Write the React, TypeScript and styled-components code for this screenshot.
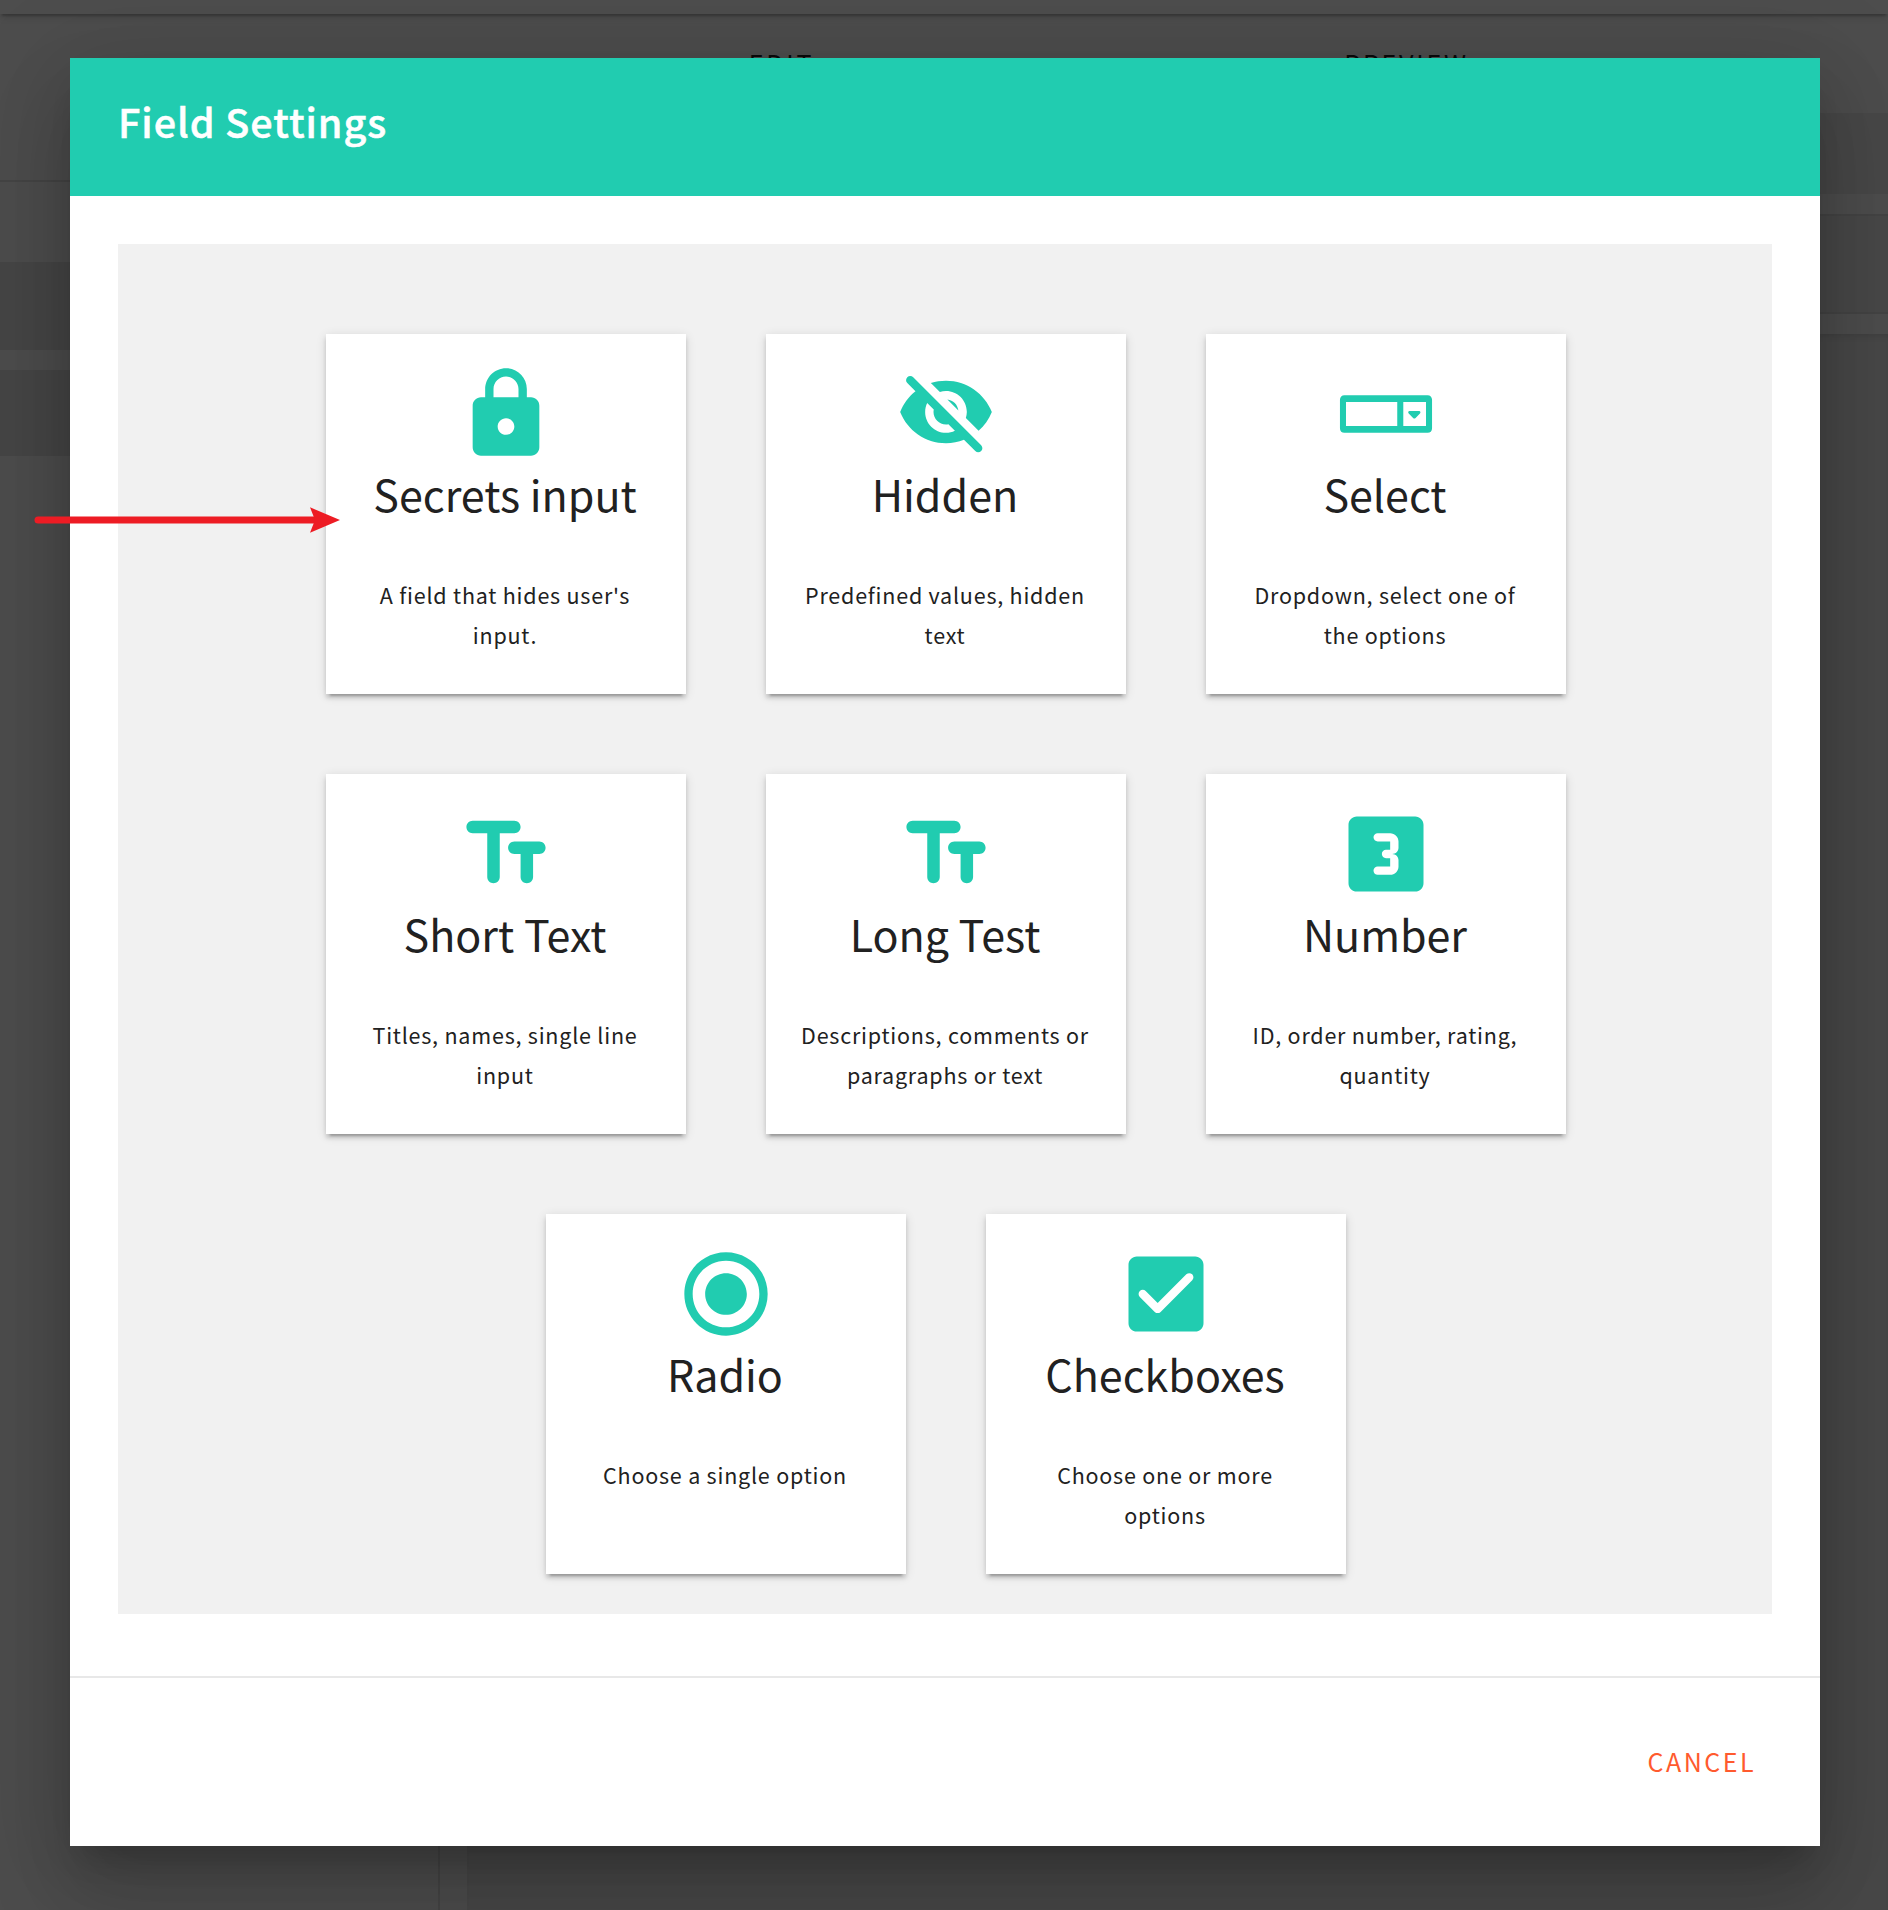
import React from "react";
import styled, { createGlobalStyle } from "styled-components";

const TEAL = "#21ccb0";

const GlobalStyle = createGlobalStyle`
  * { box-sizing: border-box; }
  html, body { margin: 0; padding: 0; background: #4c4c4c; }
  body {
    font-family: "Noto Sans CJK SC", "Noto Sans", sans-serif;
    color: #212121;
    overflow: hidden;
  }
`;

const Page = styled.div`
  position: relative;
  width: 1888px;
  height: 1910px;
  overflow: hidden;
`;

const Workspace = styled.div`
  display: flex;
  flex-direction: column;
  height: 100%;
  background: #4d4d4d;
`;

const TopBar = styled.div`
  flex: none;
  height: 14px;
  box-shadow: 0 4px 2px -2px rgba(0, 0, 0, 0.2), 0 2px 8px rgba(0, 0, 0, 0.16);
`;

const Tabs = styled.div`
  display: grid;
  grid-template-columns: 625px 625px;
  flex: none;
  height: 99px;
  padding-left: 469px;
`;

const Tab = styled.div`
  padding-top: 32px;
  font-size: 25px;
  line-height: 34px;
  letter-spacing: 2.8px;
  text-align: center;
  color: #0a0a0a;
`;

const Columns = styled.div`
  display: flex;
  flex: 1;
`;

const Sidebar = styled.div`
  display: flex;
  flex-direction: column;
  width: 440px;
  border-right: 2px solid #454545;
`;

const SidebarHead = styled.div`
  height: 69px;
  border-bottom: 2px solid #454545;
  margin-bottom: 80px;
`;

const SidebarItem = styled.div<{ $height: number }>`
  height: ${(p) => p.$height}px;
  margin-bottom: 20px;
  background: #464646;
`;

const Content = styled.div`
  display: flex;
  flex-direction: column;
  flex: 1;
  margin-left: 27px;
`;

const ContentBand = styled.div<{ $height: number; $lined?: boolean }>`
  height: ${(p) => p.$height}px;
  margin-bottom: 20px;
  background: #484848;
  border: 0 solid #444;
  border-width: ${(p) => (p.$lined ? "2px 0" : "0")};
`;

const ContentCanvas = styled.div`
  flex: 1;
  background: #484848;
  box-shadow: inset 0 6px 6px -4px rgba(0, 0, 0, 0.12);
`;

const Overlay = styled.div`
  position: absolute;
  inset: 0;
  padding: 58px 68px 64px 70px;
  display: flex;
`;

const Dialog = styled.section`
  display: flex;
  flex-direction: column;
  flex: 1;
  background: #fff;
  box-shadow: 0 22px 30px -14px rgba(0, 0, 0, 0.2),
    0 48px 76px 6px rgba(0, 0, 0, 0.14), 0 18px 92px 16px rgba(0, 0, 0, 0.12);
`;

const DialogHeader = styled.header`
  height: 138px;
  padding: 33px 48px 0;
  background: ${TEAL};
`;

const DialogTitle = styled.h2`
  margin: 0;
  font-size: 39.5px;
  line-height: 60px;
  font-weight: 500;
  letter-spacing: 0.95px;
  color: #fff;
  -webkit-text-stroke: 0.5px #fff;
`;

const DialogBody = styled.div`
  height: 1480px;
  padding: 48px 48px 62px;
`;

const Picker = styled.div`
  display: flex;
  flex-wrap: wrap;
  justify-content: center;
  align-content: flex-start;
  gap: 80px;
  height: 100%;
  padding: 90px 206px 0 208px;
  background: #f1f1f1;
`;

const Card = styled.article`
  display: flex;
  flex-direction: column;
  align-items: center;
  width: 360px;
  height: 360px;
  padding: 30px 32px 0;
  background: #fff;
  box-shadow: 0 6px 2px -4px rgba(0, 0, 0, 0.2),
    0 4px 4px rgba(0, 0, 0, 0.14), 0 2px 10px rgba(0, 0, 0, 0.12);
`;

const CardIcon = styled.svg`
  flex: none;
  width: 100px;
  height: 100px;
  fill: ${TEAL};
`;

const CardTitle = styled.h3`
  margin: 0 0 53px;
  padding-right: 2px;
  font-size: 43px;
  line-height: 58px;
  font-weight: 400;
  white-space: nowrap;
`;

const CardText = styled.p`
  margin: 0;
  padding-right: 2px;
  font-size: 21.5px;
  line-height: 40px;
  letter-spacing: 0.78px;
  text-align: center;
`;

const DialogFooter = styled.footer`
  display: flex;
  flex: 1;
  justify-content: flex-end;
  align-items: flex-start;
  padding: 65px 64px 0;
  border-top: 2px solid #e8e8e8;
`;

const CancelButton = styled.button`
  border: 0;
  padding: 0;
  background: none;
  font: inherit;
  font-size: 25px;
  line-height: 36px;
  letter-spacing: 2.5px;
  color: #ff5a2e;
`;

const Pointer = styled.svg`
  position: absolute;
  left: 30px;
  top: 500px;
  width: 320px;
  height: 40px;
`;

const SQUARE =
  "M19 3H5c-1.1 0-2 .9-2 2v14c0 1.1.9 2 2 2h14c1.1 0 2-.9 2-2V5c0-1.1-.9-2-2-2z";

const ICONS = {
  lock: "M18 8h-1V6c0-2.76-2.24-5-5-5S7 3.24 7 6v2H6c-1.1 0-2 .9-2 2v10c0 1.1.9 2 2 2h12c1.1 0 2-.9 2-2V10c0-1.1-.9-2-2-2zm-6 9c-1.1 0-2-.9-2-2s.9-2 2-2 2 .9 2 2-.9 2-2 2zM9 8V6c0-1.66 1.34-3 3-3s3 1.34 3 3v2H9z",
  hidden:
    "M12 6.5c2.76 0 5 2.24 5 5 0 .51-.1 1-.24 1.46l3.06 3.06c1.39-1.23 2.49-2.77 3.18-4.53C21.27 7.11 17 4 12 4c-1.27 0-2.49.2-3.64.57l2.17 2.17c.47-.14.96-.24 1.47-.24zM2.71 3.16c-.39.39-.39 1.02 0 1.41l1.97 1.97C3.06 7.83 1.77 9.53 1 11.5 2.73 15.89 7 19 12 19c1.52 0 2.97-.3 4.31-.82l2.72 2.72c.39.39 1.02.39 1.41 0 .39-.39.39-1.02 0-1.41L4.13 3.16c-.39-.39-1.03-.39-1.42 0zM12 16.5c-2.76 0-5-2.24-5-5 0-.77.18-1.5.49-2.14l1.57 1.57c-.03.18-.06.37-.06.57 0 1.66 1.34 3 3 3 .2 0 .38-.03.57-.07L14.14 16c-.65.32-1.37.5-2.14.5zm2.97-5.33c-.15-1.4-1.25-2.49-2.64-2.64l2.64 2.64z",
  select:
    "M2 7.5h20c.6 0 1.05.45 1.05 1.05v6.9c0 .6-.45 1.05-1.05 1.05H2c-.6 0-1.05-.45-1.05-1.05v-6.9C.95 7.95 1.4 7.5 2 7.5zM2.4 9.1v5.8h12.3V9.1zM16.15 9.1v5.8h5.45V9.1zM17.65 11.25h2.3c.35 0 .4.4.2.6l-1.05 1.1c-.2.2-.4.2-.6 0l-1.05-1.1c-.2-.2-.15-.6.2-.6z",
  text: "M2.5 5.5C2.5 6.33 3.17 7 4 7h3.5v10.5c0 .83.67 1.5 1.5 1.5s1.5-.67 1.5-1.5V7H14c.83 0 1.5-.67 1.5-1.5S14.83 4 14 4H4c-.83 0-1.5.67-1.5 1.5zM20 9h-6c-.83 0-1.5.67-1.5 1.5S13.17 12 14 12h1.5v5.5c0 .83.67 1.5 1.5 1.5s1.5-.67 1.5-1.5V12H20c.83 0 1.5-.67 1.5-1.5S20.83 9 20 9z",
  number:
    SQUARE +
    "M15 10.5c0 .83-.67 1.5-1.5 1.5.83 0 1.5.67 1.5 1.5V15c0 1.11-.9 2-2 2h-3c-.55 0-1-.45-1-1s.45-1 1-1h3v-2h-1c-.55 0-1-.45-1-1s.45-1 1-1h1V9h-3c-.55 0-1-.45-1-1s.45-1 1-1h3c1.1 0 2 .89 2 2v1.5z",
  radio:
    "M12 2C6.48 2 2 6.48 2 12s4.48 10 10 10 10-4.48 10-10S17.52 2 12 2zm0 18c-4.42 0-8-3.58-8-8s3.58-8 8-8 8 3.58 8 8-3.58 8-8 8zM12 7c-2.76 0-5 2.24-5 5s2.24 5 5 5 5-2.24 5-5-2.24-5-5-5z",
  checkbox:
    SQUARE +
    "M10.71 16.29c-.39.39-1.02.39-1.41 0L5.71 12.7c-.39-.39-.39-1.02 0-1.41.39-.39 1.02-.39 1.41 0L10 14.17l6.88-6.88c.39-.39 1.02-.39 1.41 0 .39.39.39 1.02 0 1.41l-7.58 7.59z",
};

type IconName = keyof typeof ICONS;

const FIELDS: { icon: IconName; title: string; text: string }[] = [
  { icon: "lock", title: "Secrets input", text: "A field that hides user's input." },
  { icon: "hidden", title: "Hidden", text: "Predefined values, hidden text" },
  { icon: "select", title: "Select", text: "Dropdown, select one of the options" },
  { icon: "text", title: "Short Text", text: "Titles, names, single line input" },
  { icon: "text", title: "Long Test", text: "Descriptions, comments or paragraphs or text" },
  { icon: "number", title: "Number", text: "ID, order number, rating, quantity" },
  { icon: "radio", title: "Radio", text: "Choose a single option" },
  { icon: "checkbox", title: "Checkboxes", text: "Choose one or more options" },
];

export default function App() {
  return (
    <Page>
      <GlobalStyle />
      <Workspace>
        <TopBar />
        <Tabs>
          <Tab>EDIT</Tab>
          <Tab>PREVIEW</Tab>
        </Tabs>
        <Columns>
          <Sidebar>
            <SidebarHead />
            <SidebarItem $height={88} />
            <SidebarItem $height={86} />
          </Sidebar>
          <Content>
            <ContentBand $height={81} />
            <ContentBand $height={100} $lined />
            <ContentCanvas />
          </Content>
        </Columns>
      </Workspace>
      <Overlay>
        <Dialog role="dialog">
          <DialogHeader>
            <DialogTitle>Field Settings</DialogTitle>
          </DialogHeader>
          <DialogBody>
            <Picker>
              {FIELDS.map((field) => (
                <Card key={field.title}>
                  <CardIcon viewBox="0 0 24 24" fillRule="evenodd">
                    <path d={ICONS[field.icon]} />
                  </CardIcon>
                  <CardTitle>{field.title}</CardTitle>
                  <CardText>{field.text}</CardText>
                </Card>
              ))}
            </Picker>
          </DialogBody>
          <DialogFooter>
            <CancelButton>CANCEL</CancelButton>
          </DialogFooter>
        </Dialog>
      </Overlay>
      <Pointer viewBox="0 0 320 40">
        <path d="M8 20H286" stroke="#ed1c24" strokeWidth="7" strokeLinecap="round" />
        <path d="M310 20L280 32.7L285 20L280 7.3Z" fill="#ed1c24" />
      </Pointer>
    </Page>
  );
}
